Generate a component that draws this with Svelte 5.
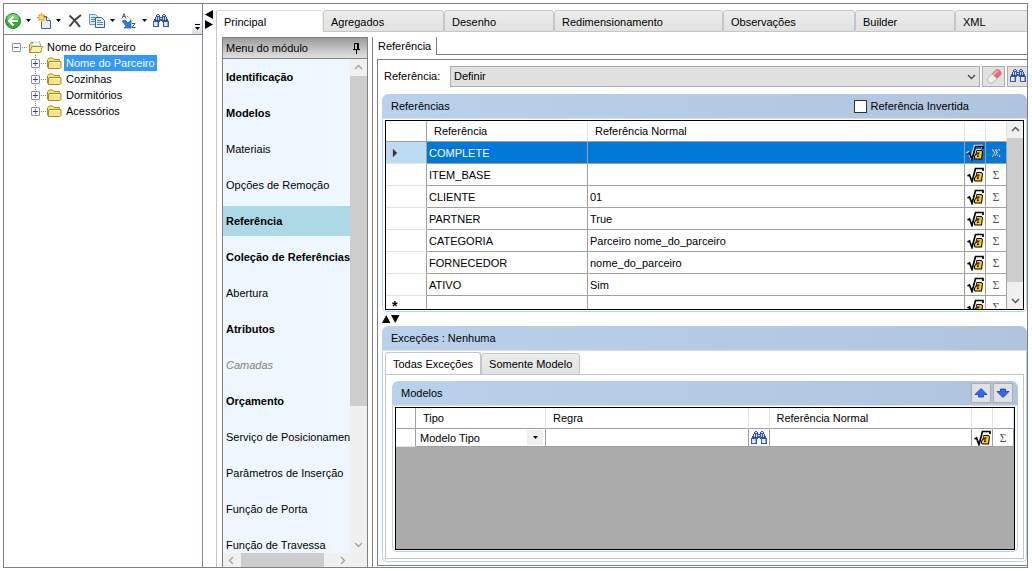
<script>
  const mainTabs = [
    { label: "Principal", width: 107 },
    { label: "Agregados", width: 121 },
    { label: "Desenho", width: 110 },
    { label: "Redimensionamento", width: 169 },
    { label: "Observações", width: 132 },
    { label: "Builder", width: 100 },
    { label: "XML", width: 100 },
  ];

  const folders = ["Nome do Parceiro", "Cozinhas", "Dormitórios", "Acessórios"];

  const menu = [
    { label: "Identificação", bold: true },
    { label: "Modelos", bold: true },
    { label: "Materiais" },
    { label: "Opções de Remoção" },
    { label: "Referência", bold: true },
    { label: "Coleção de Referências", bold: true },
    { label: "Abertura" },
    { label: "Atributos", bold: true },
    { label: "Camadas", disabled: true },
    { label: "Orçamento", bold: true },
    { label: "Serviço de Posicionamento" },
    { label: "Parâmetros de Inserção" },
    { label: "Função de Porta" },
    { label: "Função de Travessa" },
  ];

  const rows = [
    { name: "COMPLETE", value: "" },
    { name: "ITEM_BASE", value: "" },
    { name: "CLIENTE", value: "01" },
    { name: "PARTNER", value: "True" },
    { name: "CATEGORIA", value: "Parceiro nome_do_parceiro" },
    { name: "FORNECEDOR", value: "nome_do_parceiro" },
    { name: "ATIVO", value: "Sim" },
    { name: "", value: "", isNew: true },
  ];

  let activeTab = $state("Principal");
  let activeMenu = $state("Referência");
  let activeFolder = $state("Nome do Parceiro");
  let activeRow = $state(0);
  let activeScope = $state("Todas Exceções");
  let inverted = $state(false);
</script>

{#snippet binoculars()}
  <svg width="16" height="16" viewBox="0 0 16 16" aria-hidden="true">
    <path d="M3 2h1V1h2v1h1v2h2V2h1V1h2v1h1v2h1v2h1v2h1v6h-6V9H9V8H7v1H6v5H0V8h1V6h1V4h1z" fill="#3558a8" />
    <path d="M1 9h4v4H1zM11 9h4v4h-4z" fill="#dfeafb" />
    <path d="M4 9h1v4H4zM14 9h1v4h-1z" fill="#8fabdf" />
    <path d="M4 2h2v1H4zM3 4h1v3H3zM5 4h1v3H5zM10 2h2v1h-2zM10 4h1v3h-1zM12 4h1v3h-1zM7 5h2v1H7z" fill="#c6d7f5" />
    <path d="M2 7h1v1H2zM4 7h1v1H4zM11 7h1v1h-1zM13 7h1v1h-1z" fill="#1b2f78" />
  </svg>
{/snippet}

{#snippet formula()}
  <svg class="formula" width="17" height="16" viewBox="0 0 17 16" aria-hidden="true">
    <path d="M.5 9L2.500 8L5 14.500L8.500 1.500H16V4" fill="none" stroke="#000" stroke-width="1.700" />
    <path d="M9.500 5h5l1.500 1.500-1 8H8L7 13.500V11l1.500-2z" fill="#000" />
    <path d="M10 6h4.500l.5 1-1 6.500H8.500L8 13v-2l1.500-1.500H12v-1H9.500z" fill="#ffc60b" />
    <path d="M10 10.500h2l-.4 1.500H10zM10 7.500h2.500v1H10z" fill="#000" />
  </svg>
{/snippet}

{#snippet drop()}
  <svg class="drop" width="5" height="3" viewBox="0 0 5 3" aria-hidden="true"><path d="M0 0h5L2.500 3z" /></svg>
{/snippet}

{#snippet chevron(angle)}
  <svg width="9" height="9" viewBox="0 0 9 9" aria-hidden="true">
    <path d="M1 6l3.500-3.500L8 6" transform="rotate({angle} 4.500 4.500)" fill="none" stroke="currentColor" stroke-width="1.300" />
  </svg>
{/snippet}

{#snippet folder(open)}
  <svg width="15" height="14" viewBox="0 0 15 14" aria-hidden="true">
    {#if open}
      <path d="M1.500 12V4.500L3 2.500h3l1 1.500h5.500V12z" fill="#f5e08a" stroke="#b08d1e" />
      <path d="M3 6l3.500-5 2 2 2.500-2 1.500 5z" fill="#fff" stroke="#9aa" stroke-width=".6" />
      <path d="M1.500 12.500l2.500-6h10.500l-2 6z" fill="#fff1a8" stroke="#b08d1e" />
    {:else}
      <path d="M.5 11.500v-8L2 2h3.500L7 3.500h5.500v2" fill="#f5dc78" stroke="#b08d1e" />
      <path d="M1.500 12.500V6L3 5.500h11v6l-1 1z" fill="#fbe48a" stroke="#b08d1e" />
      <path d="M3 6.500h10" stroke="#fffbd8" />
    {/if}
  </svg>
{/snippet}

<div class="frame">
  <aside class="explorer">
    <div class="toolbar">
      <button aria-label="Voltar">
        <svg width="16" height="16" viewBox="0 0 16 16">
          <circle cx="8" cy="8" r="7.500" fill="#35a836" stroke="#2c8a2c" />
          <path d="M2 6.500a6 5.500 0 0 1 12 0z" fill="#7bd46a" />
          <path d="M8.500 3.500L4 8l4.500 4.500M4.500 8H13" fill="none" stroke="#fff" stroke-width="2.200" />
        </svg>
        {@render drop()}
      </button>
      <button aria-label="Novo">
        <svg width="14" height="16" viewBox="0 0 14 16">
          <path d="M4.500 3.500h5l4 4v8h-9z" fill="#e8eefa" stroke="#49618e" />
          <path d="M9.500 3.500v4h4" fill="#fff" stroke="#49618e" />
          <path d="M4.500 0v9M0 4.500h9M1.500 1.500l6 6M7.500 1.500l-6 6" stroke="#f29a1c" stroke-width="1.500" />
          <circle cx="4.500" cy="4.500" r="2" fill="#ffe27a" />
        </svg>
        {@render drop()}
      </button>
      <button aria-label="Excluir">
        <svg width="16" height="16" viewBox="0 0 16 16">
          <path d="M2.500 2.500Q8 7 13 14M14 2Q8 6 2.500 13.500" fill="none" stroke="#444" stroke-width="2" />
        </svg>
      </button>
      <button aria-label="Copiar">
        <svg width="16" height="16" viewBox="0 0 16 16">
          <path d="M.5 1.500h6l2 2v8h-8z" fill="#dce9fb" stroke="#6b92d4" />
          <path d="M2 4.500h4M2 6.500h5M2 8.500h5" stroke="#4f7fcc" />
          <path d="M6.500 4.500h6l3 3v7h-9z" fill="#e9f2ff" stroke="#2f5cab" />
          <path d="M8 7.500h4M8 9.500h6M8 11.500h6" stroke="#4f7fcc" />
        </svg>
        {@render drop()}
      </button>
      <button aria-label="Ordenar">
        <svg width="16" height="16" viewBox="0 0 16 16">
          <path d="M1 5.500L3 .5l2 5M2 3.500h2M11 10.500h3l-3 4h3.500" fill="none" stroke="#555" />
          <path d="M6 3l6 5" stroke="#777" stroke-dasharray="1 1" />
          <path d="M1 8l3-1 3 3 3-3v8H3l2-2z" fill="#1e82d8" stroke="#1262ac" stroke-width=".7" />
        </svg>
        {@render drop()}
      </button>
      <button aria-label="Localizar">{@render binoculars()}</button>
      <button class="overflow" aria-label="Mais opções">
        <svg width="5" height="7" viewBox="0 0 5 7"><path d="M0 0h5v1H0zM0 3h5L2.500 6z" /></svg>
      </button>
    </div>

    <ul class="tree">
      <li>
        <div class="node">
          <button class="expander" aria-label="Recolher">−</button>
          <span class="dots"></span>
          {@render folder(true)}
          <button class="name">Nome do Parceiro</button>
        </div>
        <ul>
          {#each folders as item}
            <li class="node">
              <button class="expander" aria-label="Expandir {item}">+</button>
              <span class="dots"></span>
              {@render folder(false)}
              <button class="name" class:selected={item === activeFolder} onclick={() => (activeFolder = item)}>{item}</button>
            </li>
          {/each}
        </ul>
      </li>
    </ul>
  </aside>

  <div class="splitter">
    <svg width="9" height="20" viewBox="0 0 9 20" aria-hidden="true"><path d="M8 0v9L0 4.500zM0 10v9l8-4.500z" /></svg>
  </div>

  <main>
    <div class="tabs" role="tablist">
      {#each mainTabs as tab}
        <button
          role="tab"
          aria-selected={tab.label === activeTab}
          class:active={tab.label === activeTab}
          style="width: {tab.width}px"
          onclick={() => (activeTab = tab.label)}>{tab.label}</button
        >
      {/each}
    </div>

    <div class="workspace">
      <nav class="module">
        <header>
          <span>Menu do módulo</span>
          <svg width="9" height="12" viewBox="0 0 9 12" aria-hidden="true">
            <path d="M2.500 7V1.500h4V7M5.500 1.500V7M1 7.500h7M4.500 8v4" fill="none" stroke="#000" />
          </svg>
        </header>
        <div class="module-body">
          <ul>
            {#each menu as item}
              <li>
                <button
                  class:bold={item.bold}
                  class:current={item.label === activeMenu}
                  disabled={item.disabled}
                  onclick={() => (activeMenu = item.label)}>{item.label}</button
                >
              </li>
            {/each}
          </ul>
          <div class="vscroll light">
            {@render chevron(0)}
            <i class="menu-thumb"></i>
            {@render chevron(180)}
          </div>
        </div>
        <div class="hscroll">
          {@render chevron(-90)}
          <i></i>
          {@render chevron(90)}
        </div>
      </nav>

      <section class="content">
        <div class="page-tabs">
          <button>Referência</button>
        </div>
        <div class="page">
          <div class="lookup">
            <label for="reference">Referência:</label>
            <div class="combo">
              <select id="reference"><option>Definir</option></select>
              {@render chevron(180)}
            </div>
            <button aria-label="Limpar">
              <svg width="16" height="16" viewBox="0 0 16 16">
                <g transform="rotate(-45 8 8)">
                  <rect x="0" y="5" width="16" height="7" rx="3" fill="#f1eeee" stroke="#a9a4a6" stroke-width=".7" />
                  <path d="M8 5h5a3 3 0 0 1 3 3v1a3 3 0 0 1-3 3H8z" fill="#e36d7c" />
                  <path d="M8 6h5a2 2 0 0 1 2 1.500H8z" fill="#f7b3ba" />
                </g>
              </svg>
            </button>
            <button aria-label="Localizar referência">{@render binoculars()}</button>
          </div>

          <section class="group references">
            <header>
              <span>Referências</span>
              <label><input type="checkbox" bind:checked={inverted} />Referência Invertida</label>
            </header>
            <div class="grid">
              <div class="grid-view">
                <table>
                  <colgroup>
                    <col class="c-row" /><col class="c-name" /><col /><col class="c-icon" /><col class="c-icon" />
                  </colgroup>
                  <thead>
                    <tr><th></th><th>Referência</th><th>Referência Normal</th><th></th><th></th></tr>
                  </thead>
                  <tbody>
                    {#each rows as row, i}
                      <tr class:selected={i === activeRow} onclick={() => (activeRow = i)}>
                        <td class="marker">
                          {#if i === activeRow}
                            <svg width="6" height="10" viewBox="0 0 6 10"><path d="M.5 0l5 5-5 5z" fill="#333" stroke="#fff" stroke-width=".5" /></svg>
                          {:else if row.isNew}
                            <b>*</b>
                          {/if}
                        </td>
                        <td>{row.name}</td>
                        <td>{row.value}</td>
                        <td class="icon"><button aria-label="Fórmula">{@render formula()}</button></td>
                        <td class="icon"><button>Σ</button></td>
                      </tr>
                    {/each}
                  </tbody>
                </table>
              </div>
              <div class="vscroll">
                {@render chevron(0)}
                <i class="grid-thumb"></i>
                {@render chevron(180)}
              </div>
            </div>
          </section>

          <div class="hsplitter">
            <svg width="18" height="8" viewBox="0 0 18 8" aria-hidden="true"><path d="M0 8h8.500L4.200 0zM9 0h8.500L13.200 8z" /></svg>
          </div>

          <section class="group exceptions">
            <header><span>Exceções : Nenhuma</span></header>
            <div class="scope-tabs" role="tablist">
              {#each ["Todas Exceções", "Somente Modelo"] as scope}
                <button
                  role="tab"
                  aria-selected={scope === activeScope}
                  class:active={scope === activeScope}
                  onclick={() => (activeScope = scope)}>{scope}</button
                >
              {/each}
            </div>
            <div class="scope">
              <section class="group models">
                <header>
                  <span>Modelos</span>
                  <div class="order">
                    <button aria-label="Mover para cima">
                      <svg width="14" height="10" viewBox="0 0 14 10"><path d="M7 .5L13 6.500H9.500V9h-5V6.500H1z" fill="#2d6bf0" stroke="#1737b4" stroke-width=".8" /></svg>
                    </button>
                    <button aria-label="Mover para baixo">
                      <svg width="14" height="10" viewBox="0 0 14 10"><path d="M7 9.500L13 3.500H9.500V1h-5v2.500H1z" fill="#2d6bf0" stroke="#1737b4" stroke-width=".8" /></svg>
                    </button>
                  </div>
                </header>
                <div class="grid gray">
                  <table>
                    <colgroup>
                      <col class="m-row" /><col class="m-type" /><col /><col class="c-icon" /><col /><col class="c-icon" /><col class="c-icon" />
                    </colgroup>
                    <thead>
                      <tr><th></th><th>Tipo</th><th>Regra</th><th></th><th>Referência Normal</th><th></th><th></th></tr>
                    </thead>
                    <tbody>
                      <tr>
                        <td class="marker"></td>
                        <td>
                          <div class="cell-select">
                            <select aria-label="Tipo"><option>Modelo Tipo</option></select>
                            <span>{@render drop()}</span>
                          </div>
                        </td>
                        <td></td>
                        <td class="icon"><button aria-label="Localizar regra">{@render binoculars()}</button></td>
                        <td></td>
                        <td class="icon"><button aria-label="Fórmula">{@render formula()}</button></td>
                        <td class="icon"><button>Σ</button></td>
                      </tr>
                    </tbody>
                  </table>
                </div>
              </section>
            </div>
          </section>
        </div>
      </section>
    </div>
  </main>
</div>

<style>
  :global(body) {
    background: #fff;
  }
  .frame,
  .frame :global(*) {
    box-sizing: border-box;
  }
  .frame {
    display: flex;
    height: calc(100vh - 6px);
    margin: 3px 4px 3px 3px;
    border: 1px solid #808080;
    overflow: hidden;
    font: 11px/16px "Liberation Sans", Arial, sans-serif;
    color: #000;
  }
  button,
  select {
    font: inherit;
    color: inherit;
    margin: 0;
    padding: 0;
    border: 0;
    border-radius: 0;
    background: none;
  }
  ul {
    list-style: none;
    margin: 0;
    padding: 0;
  }
  svg {
    display: block;
    flex: none;
  }

  /* explorer */
  .explorer {
    flex: none;
    width: 199px;
    border-right: 1px solid #84849a;
  }
  .toolbar {
    display: flex;
    align-items: center;
    gap: 6px;
    height: 31px;
    padding: 3px 0 0 1px;
    border-bottom: 1px solid #84849a;
  }
  .toolbar button {
    display: flex;
    align-items: center;
    gap: 5px;
  }
  .toolbar .overflow {
    align-self: flex-end;
    justify-content: center;
    width: 10px;
    height: 14px;
    margin-left: auto;
    background: linear-gradient(#fff, #dcdcdc);
  }
  .tree {
    padding: 4px 0 0 8px;
  }
  .tree ul {
    padding-left: 19px;
    background: repeating-linear-gradient(#888 0 1px, transparent 1px 2px) 23px 0 / 1px 56px no-repeat;
  }
  .node {
    display: flex;
    align-items: center;
    height: 16px;
  }
  .expander {
    flex: none;
    width: 9px;
    height: 9px;
    border: 1px solid #919191;
    border-radius: 1px;
    background: #fff;
    color: #223f8f;
    font-size: 10px;
    line-height: 7px;
  }
  .dots {
    width: 7px;
    height: 1px;
    background: repeating-linear-gradient(90deg, transparent 0 1px, #888 1px 2px);
  }
  .name {
    height: 16px;
    margin-left: 2px;
    padding: 0 2px;
    white-space: nowrap;
  }
  .name.selected {
    background: #3399ff;
    color: #fff;
  }
  .splitter {
    flex: none;
    width: 13px;
    padding: 6px 0 0 2px;
  }

  /* main tabs */
  main {
    flex: 1;
    min-width: 0;
    display: flex;
    flex-direction: column;
    padding-top: 6px;
  }
  .tabs {
    display: flex;
    flex: none;
    height: 22px;
    overflow: hidden;
  }
  .tabs button {
    flex: none;
    padding: 2px 7px 0;
    text-align: left;
    border: 1px solid #c6c6c6;
    border-radius: 3px 3px 0 0;
    background: linear-gradient(#ececec, #e1e1e1);
  }
  .tabs .active {
    border-right-color: #f0f0f0;
    border-bottom-color: #fff;
    border-top-color: #ddd;
    background: #fff;
  }
  .workspace {
    flex: 1;
    min-height: 0;
    display: flex;
    gap: 4px;
    padding: 5px 0 0 5px;
    border-left: 1px solid #c8c8c8;
  }

  /* module menu */
  .module {
    flex: none;
    display: flex;
    flex-direction: column;
    width: 146px;
    border: solid #808080;
    border-width: 1px 1px 0;
  }
  .module header {
    display: flex;
    align-items: center;
    justify-content: space-between;
    height: 21px;
    padding: 0 6px 0 3px;
    border-bottom: 1px solid #808080;
    background: linear-gradient(#9c9c9c, #e2e2e2);
  }
  .module-body {
    flex: 1;
    min-height: 0;
    display: flex;
  }
  .module ul {
    flex: 1;
    min-width: 0;
    padding-top: 3px;
    overflow: hidden;
    background: #eef7ff;
  }
  .module li {
    margin-bottom: 6px;
  }
  .module li button {
    display: block;
    width: 100%;
    height: 30px;
    padding-left: 3px;
    overflow: hidden;
    text-align: left;
    white-space: nowrap;
  }
  .module li .bold {
    font-weight: bold;
  }
  .module li .current {
    background: #add8e6;
  }
  .module li button:disabled {
    color: #808080;
    font-style: italic;
  }

  /* scroll bars */
  .vscroll {
    flex: none;
    display: flex;
    flex-direction: column;
    align-items: center;
    justify-content: space-between;
    width: 16px;
    padding: 4px 0;
    background: #f0f0f0;
    color: #505050;
  }
  .light,
  .hscroll {
    color: #a0a0a0;
  }
  .light {
    width: 17px;
  }
  .vscroll i {
    width: 100%;
    margin: 4px 0 auto;
    background: #cdcdcd;
  }
  .menu-thumb {
    height: 68%;
  }
  .grid-thumb {
    height: 80%;
  }
  .hscroll {
    display: flex;
    align-items: center;
    gap: 5px;
    height: 14px;
    padding: 0 20px 0 4px;
    background: #f0f0f0;
  }
  .hscroll i {
    width: 83px;
    height: 100%;
    margin-right: auto;
    background: #cdcdcd;
  }

  /* content page */
  .content {
    flex: 1;
    min-width: 0;
    display: flex;
    flex-direction: column;
    padding-bottom: 1px;
    border-left: 1px solid #808080;
  }
  .page-tabs {
    display: flex;
    flex: none;
    height: 18px;
  }
  .page-tabs button {
    padding: 0 5px;
    border-right: 1px solid #808080;
  }
  .page-tabs::after {
    content: "";
    flex: 1;
    border-bottom: 1px solid #808080;
  }
  .page {
    flex: 1;
    min-height: 0;
    display: flex;
    flex-direction: column;
    margin: 4px 0 0 4px;
    padding: 5px 0 3px 4px;
    border: solid #808080;
    border-width: 1px 0 1px 1px;
  }
  .lookup {
    display: flex;
    align-items: center;
    gap: 2px;
    height: 22px;
    padding-left: 2px;
  }
  .lookup label {
    width: 64px;
  }
  .combo {
    flex: 1;
    position: relative;
    height: 21px;
  }
  .combo select {
    appearance: none;
    width: 100%;
    height: 100%;
    padding: 0 3px;
    border: 1px solid #adadad;
    background: #e1e1e1;
  }
  .combo :global(svg) {
    position: absolute;
    right: 4px;
    top: 6px;
    color: #444;
    pointer-events: none;
  }
  .lookup button {
    display: flex;
    align-items: center;
    justify-content: center;
    width: 23px;
    height: 21px;
    border: 1px solid #adadad;
    background: #e1e1e1;
  }
  .lookup button:last-child {
    width: 20px;
    border-right: 0;
  }

  /* blue group boxes */
  .group {
    display: flex;
    flex-direction: column;
    border: 1px solid #b9d1ea;
    border-top: 0;
    border-radius: 7px 7px 5px 5px;
  }
  .group > header {
    display: flex;
    align-items: center;
    justify-content: space-between;
    flex: none;
    height: 25px;
    margin: 0 -1px;
    padding: 0 5px 0 9px;
    border-bottom: 1px solid #d3e2f3;
    border-radius: 7px 7px 0 0;
    background: linear-gradient(90deg, #b9d1ea, #b0c4de);
  }
  .references {
    flex: none;
    height: 218px;
    margin-top: 7px;
    padding: 0 2px 1px;
  }
  .references > header {
    margin: 0 -3px;
    padding-right: 58px;
  }
  .references header label {
    display: flex;
    align-items: center;
    gap: 4px;
  }
  input[type="checkbox"] {
    appearance: none;
    width: 13px;
    height: 13px;
    margin: 0;
    border: 1px solid #333;
    background: #fff;
  }
  input[type="checkbox"]:checked {
    background: #0078d7;
  }
  .grid {
    flex: 1;
    min-height: 0;
    display: flex;
    margin-top: 1px;
    border: 1px solid #000;
    background: #fff;
  }
  .grid-view {
    flex: 1;
    min-width: 0;
    overflow: hidden;
  }
  .gray {
    display: block;
    background: #ababab;
  }
  table {
    width: 100%;
    table-layout: fixed;
    border-spacing: 0;
    background: #fff;
  }
  .c-row {
    width: 41px;
  }
  .c-name {
    width: 161px;
  }
  .c-icon {
    width: 21px;
  }
  .m-row {
    width: 20px;
  }
  .m-type {
    width: 130px;
  }
  th,
  td {
    height: 22px;
    padding: 0 2px;
    overflow: hidden;
    border: solid #a0a0a0;
    border-width: 0 1px 1px 0;
    text-align: left;
    font-weight: normal;
    white-space: nowrap;
  }
  th {
    height: 21px;
    padding: 0 7px;
    border-right-color: #e3e3e3;
  }
  th:first-child {
    border-right-color: #a0a0a0;
  }
  .marker {
    padding-left: 6px;
    border-bottom-color: #e3e3e3;
  }
  .marker b {
    font-size: 14px;
  }
  tr.selected td {
    background: #0078d7;
    color: #fff;
  }
  tr.selected .marker {
    background: #bcdcf4;
  }
  .icon {
    padding: 0;
  }
  .icon button {
    display: flex;
    align-items: center;
    justify-content: center;
    width: 20px;
    height: 17px;
    color: #555;
    font: 12px/16px "Liberation Serif", serif;
  }
  tr.selected .icon button {
    text-shadow: 1px 0 #fff, -1px 0 #fff;
  }
  tr.selected :global(.formula) {
    filter: drop-shadow(-1px -1px 0 #cfe4f7);
  }
  .hsplitter {
    flex: none;
    padding: 3px 0;
  }

  /* exceptions */
  .exceptions {
    flex: 1;
    min-height: 0;
    padding: 0 2px 2px;
  }
  .exceptions > header {
    margin: 0 -3px;
  }
  .scope-tabs {
    display: flex;
    align-items: flex-end;
    flex: none;
    height: 24px;
    margin-bottom: -1px;
    padding-top: 1px;
  }
  .scope-tabs button {
    height: 22px;
    padding: 0 7px;
    border: 1px solid #c6c6c6;
    border-radius: 3px 3px 0 0;
    background: linear-gradient(#ececec, #e1e1e1);
  }
  .scope-tabs .active {
    height: 23px;
    border-bottom-color: #fff;
    background: #fff;
  }
  .scope {
    flex: 1;
    min-height: 0;
    display: flex;
    padding: 6px 5px 6px 6px;
    border: 1px solid #c6c6c6;
  }
  .models {
    flex: 1;
    min-width: 0;
    padding: 0 2px 1px;
  }
  .models > header {
    margin: 0 -3px;
  }
  .order {
    display: flex;
    gap: 2px;
  }
  .order button {
    display: flex;
    align-items: center;
    justify-content: center;
    width: 20px;
    height: 20px;
    border: 1px solid #adadad;
    background: #e1e1e1;
  }
  .models td {
    height: 18px;
  }
  .cell-select {
    display: flex;
    position: relative;
    height: 17px;
  }
  .cell-select select {
    appearance: none;
    width: 100%;
    padding: 0 2px;
  }
  .cell-select span {
    position: absolute;
    right: 0;
    top: 1px;
    display: flex;
    align-items: center;
    justify-content: center;
    width: 16px;
    height: 15px;
    background: #f0f0f0;
    pointer-events: none;
  }
</style>
